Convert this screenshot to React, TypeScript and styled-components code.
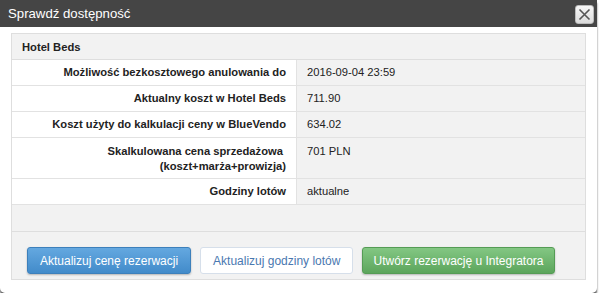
import styled, { createGlobalStyle } from "styled-components";

const GlobalStyle = createGlobalStyle`
  html, body {
    margin: 0;
    padding: 0;
    background: #ffffff;
    font-family: "Liberation Sans", Arial, sans-serif;
  }
`;

const Dialog = styled.div`
  width: 597px;
  height: 293px;
  background: #fff;
  border-radius: 0 0 5px 5px;
  box-shadow: 0 3px 2px rgba(0, 0, 0, 0.65);
  display: flex;
  flex-direction: column;
`;

const TitleBar = styled.div`
  height: 27px;
  background: #454545;
  display: flex;
  align-items: center;
  justify-content: space-between;
  padding: 0 3px 0 8px;
  box-sizing: border-box;
`;

const Title = styled.span`
  color: #fff;
  font-size: 13.2px;
`;

const CloseButton = styled.button`
  width: 19px;
  height: 19px;
  padding: 0;
  margin-top: 2px;
  border: 1px solid #bbb;
  border-radius: 3px;
  background: linear-gradient(#f6f6f6, #dcdcdc);
  display: flex;
  align-items: center;
  justify-content: center;
`;

const Panel = styled.div`
  margin: 6px 11px 0;
  border: 1px solid #dedede;
  background: #f2f2f2;
  display: flex;
  flex-direction: column;
`;

const PanelHeader = styled.div`
  height: 25px;
  display: flex;
  align-items: center;
  padding-left: 10px;
  font-size: 11.2px;
  font-weight: bold;
  color: #222;
  border-bottom: 1px solid #dedede;
`;

const Table = styled.div`
  display: grid;
  grid-template-columns: 285px 1fr;
`;

const Label = styled.div<{ $tall?: boolean }>`
  background: #fff;
  border-bottom: 1px solid #e2e2e2;
  border-right: 1px solid #e2e2e2;
  display: flex;
  flex-direction: column;
  justify-content: ${(p) => (p.$tall ? "flex-start" : "center")};
  align-items: flex-end;
  padding: ${(p) => (p.$tall ? "6px 10px 0 0" : "0 10px 0 0")};
  height: ${(p) => (p.$tall ? 34 : 25)}px;
  font-size: 11.2px;
  font-weight: bold;
  color: #222;
  text-align: right;
  line-height: 15px;
`;

const Value = styled.div<{ $tall?: boolean }>`
  border-bottom: 1px solid #e2e2e2;
  display: flex;
  align-items: ${(p) => (p.$tall ? "flex-start" : "center")};
  padding: ${(p) => (p.$tall ? "6px 0 0 10px" : "0 0 0 10px")};
  height: ${(p) => (p.$tall ? 34 : 25)}px;
  font-size: 11.2px;
  color: #222;
  line-height: 15px;
`;

const Spacer = styled.div`
  height: 26px;
  border-bottom: 1px solid #dedede;
`;

const Footer = styled.div`
  display: flex;
  gap: 9px;
  padding: 15px 15px 5px;
`;

const Button = styled.button<{ $variant: "primary" | "default" | "success" }>`
  height: 27px;
  padding: 0 12px;
  font-family: "Liberation Sans", Arial, sans-serif;
  font-size: 12px;
  white-space: nowrap;
  border-radius: 3px;
  cursor: pointer;
  ${(p) =>
    p.$variant === "primary"
      ? `
    color: #fff;
    background: linear-gradient(#64a8e0, #428bca);
    border: 1px solid #3d80bb;
    box-shadow: 0 1px 2px rgba(0,0,0,0.25);
  `
      : p.$variant === "success"
        ? `
    color: #fff;
    padding: 0 10px;
    background: linear-gradient(#83c783, #5ca55c);
    border: 1px solid #559c55;
    box-shadow: 0 1px 2px rgba(0,0,0,0.25);
  `
        : `
    color: #4a78b0;
    background: #fff;
    border: 1px solid #d6dfea;
  `}
`;

const rows: { label: React.ReactNode; value: string; tall?: boolean }[] = [
  { label: "Możliwość bezkosztowego anulowania do", value: "2016-09-04 23:59" },
  { label: "Aktualny koszt w Hotel Beds", value: "711.90" },
  { label: "Koszt użyty do kalkulacji ceny w BlueVendo", value: "634.02" },
  {
    label: (
      <>
        <span>Skalkulowana cena sprzedażowa&nbsp;</span>
        <span>(koszt+marża+prowizja)</span>
      </>
    ),
    value: "701 PLN",
    tall: true,
  },
  { label: "Godziny lotów", value: "aktualne" },
];

const App = () => {
  return (
    <>
      <GlobalStyle />
      <Dialog>
        <TitleBar>
          <Title>Sprawdź dostępność</Title>
          <CloseButton aria-label="Zamknij">
            <svg width="13" height="13" viewBox="0 0 13 13">
              <path
                d="M1.5 1.5 L11.5 11.5 M11.5 1.5 L1.5 11.5"
                stroke="#555"
                strokeWidth="1.6"
                fill="none"
              />
            </svg>
          </CloseButton>
        </TitleBar>
        <Panel>
          <PanelHeader>Hotel Beds</PanelHeader>
          <Table>
            {rows.map((row, i) => (
              <>
                <Label key={`l${i}`} $tall={row.tall}>
                  {row.label}
                </Label>
                <Value key={`v${i}`} $tall={row.tall}>
                  {row.value}
                </Value>
              </>
            ))}
          </Table>
          <Spacer />
          <Footer>
            <Button $variant="primary">Aktualizuj cenę rezerwacji</Button>
            <Button $variant="default">Aktualizuj godziny lotów</Button>
            <Button $variant="success">Utwórz rezerwację u Integratora</Button>
          </Footer>
        </Panel>
      </Dialog>
    </>
  );
};

export default App;
